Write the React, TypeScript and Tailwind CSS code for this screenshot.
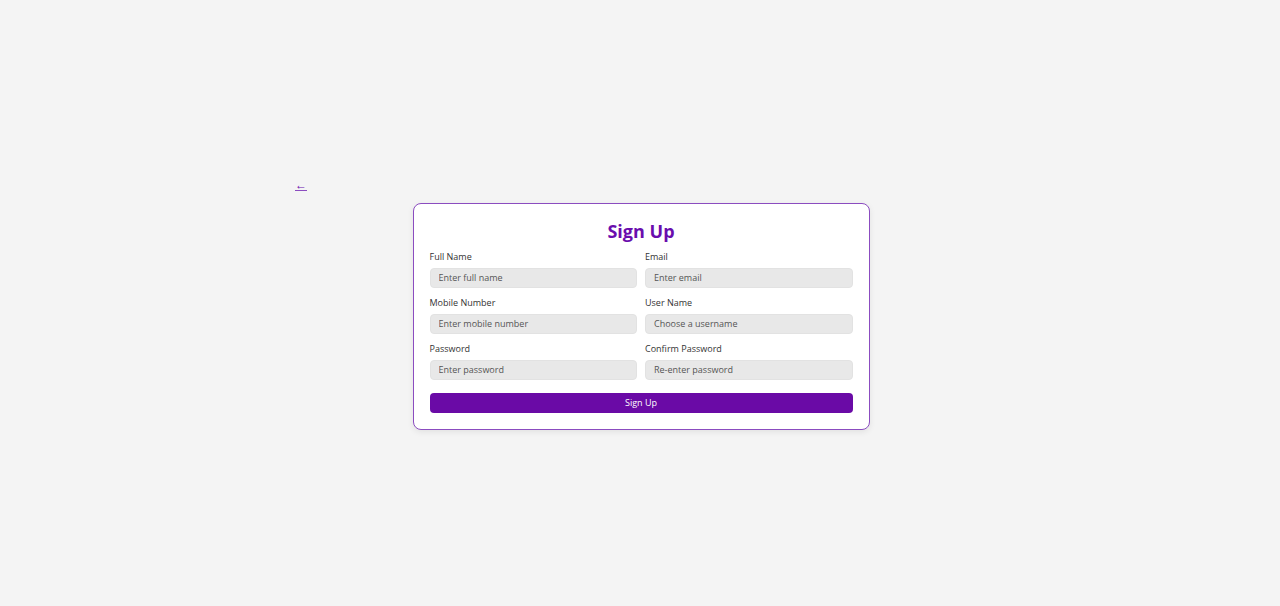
import React from "react"

interface FieldProps {
  label: string
  placeholder: string
  type?: string
}

function Field(props: FieldProps) {
  return (
    <div className="flex flex-col">
      <label className="mb-[5px] text-[9px] leading-[12px] text-[#333]">{props.label}</label>
      <input
        type={props.type ?? "text"}
        placeholder={props.placeholder}
        className="h-5 w-full rounded-[4px] border border-[#e2e2e2] bg-[#e8e8e8] px-2 text-[9px] text-[#333] placeholder:text-[#555] outline-none"
      />
    </div>
  )
}

export default function App() {
  return (
    <div
      className="flex min-h-screen items-center justify-center bg-[#f4f4f4]"
      style={{ fontFamily: '"Open Sans", "Noto Sans", sans-serif' }}
    >
      <div className="w-[690px]">
        <a href="#" className="block w-fit text-[12px] leading-[16px] text-[#6a0dad] underline decoration-[#8b4cc0]">
          ←
        </a>
        <div className="mx-auto mt-[10px] w-[457px] translate-x-[1px] rounded-[8px] border border-[#8b4cc0] bg-white px-4 pt-[15px] pb-[16px] shadow-[0_2px_6px_rgba(0,0,0,0.08)]">
          <h1 className="mb-2 text-center text-[18px] font-bold leading-[24px] text-[#6a0dad]">Sign Up</h1>
          <div className="grid grid-cols-2 gap-x-2 gap-y-[9px]">
            <Field label="Full Name" placeholder="Enter full name" />
            <Field label="Email" placeholder="Enter email" type="email" />
            <Field label="Mobile Number" placeholder="Enter mobile number" />
            <Field label="User Name" placeholder="Choose a username" />
            <Field label="Password" placeholder="Enter password" type="password" />
            <Field label="Confirm Password" placeholder="Re-enter password" type="password" />
          </div>
          <button className="mt-[13px] h-5 w-full rounded-[4px] bg-[#6a0aa6] text-[9px] leading-5 text-white">
            Sign Up
          </button>
        </div>
      </div>
    </div>
  )
}
